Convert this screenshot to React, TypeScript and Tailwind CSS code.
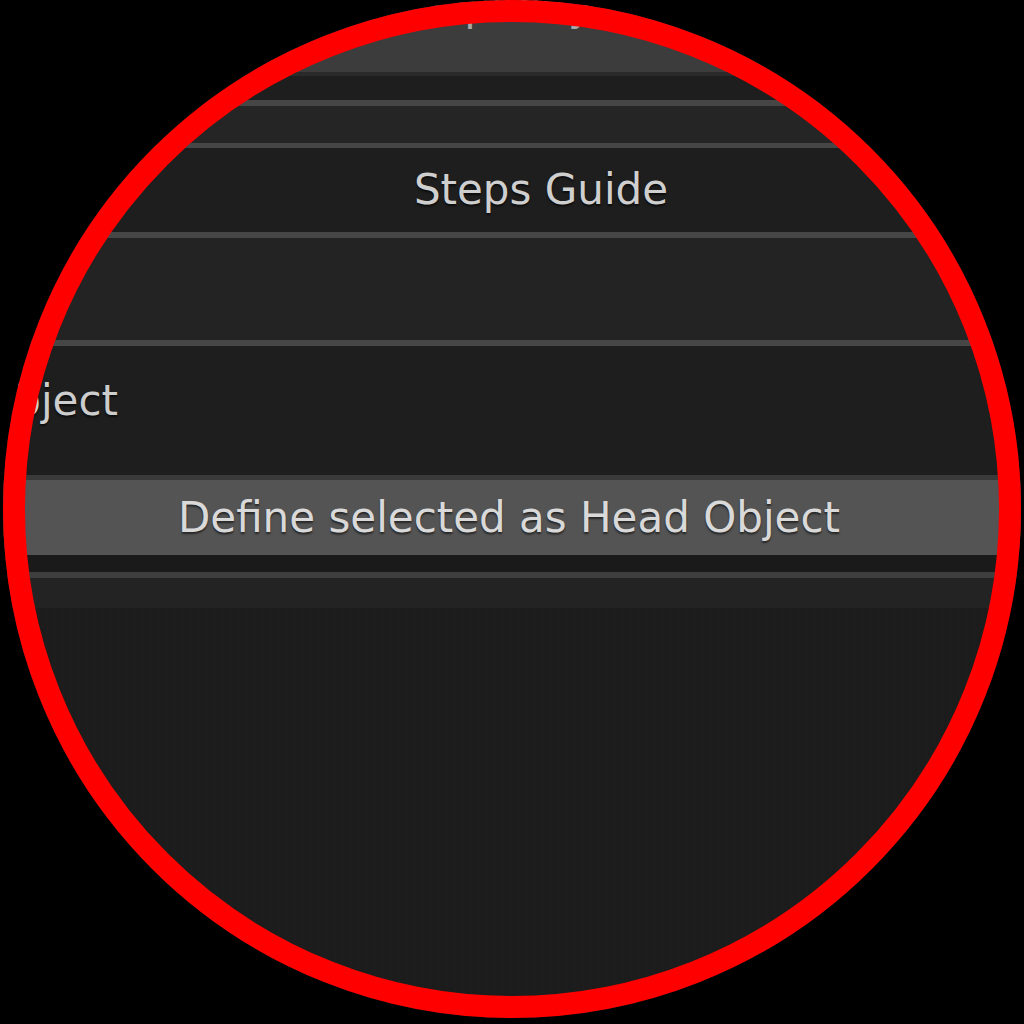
import React from 'react';

const font = { fontFamily: '"DejaVu Sans", "Liberation Sans", sans-serif' };

const Line = ({ c = 'bg-[#464646]', h = 'h-[6px]' }: { c?: string; h?: string }) => (
  <div className={`${h} ${c}`} />
);

export default function App() {
  return (
    <div className="relative w-[1024px] h-[1024px] overflow-hidden bg-[#1c1c1c] text-[42px] leading-none" style={font}>
      {/* zoomed panel */}
      <div className="flex flex-col">
        {/* header with slider label */}
        <div className="h-[72px] bg-[#3c3c3c] flex justify-center overflow-hidden">
          <span className="-mt-[15px] text-[#a8a8a8]">Opacity</span>
        </div>
        <div className="h-[4px] bg-[#2a2a2a]" />
        <div className="h-[24px] bg-[#1e1e1e]" />
        <Line />
        <div className="h-[37px] bg-[#252525]" />
        <Line h="h-[5px]" />
        <div className="h-[84px] bg-[#1e1e1e] flex items-center justify-center pl-[58px]">
          <span className="text-[#cfcfcf] [text-shadow:0_2px_2px_rgba(0,0,0,0.6)]">Steps Guide</span>
        </div>
        <Line />
        <div className="h-[102px] bg-[#232323]" />
        <Line />
        <div className="h-[129px] bg-[#1e1e1e] flex items-center pb-[20px]">
          <div className="w-[118px] flex justify-end whitespace-nowrap">
            <span className="text-[#cdcdcd] [text-shadow:0_2px_2px_rgba(0,0,0,0.6)]">Head Object</span>
          </div>
        </div>
        <div className="h-[5px] bg-[#3a3a3a]" />
        <div className="h-[75px] bg-[#545454] flex items-center justify-center pr-[6px]">
          <span className="text-[#d9d9d9] [text-shadow:0_2px_2px_rgba(0,0,0,0.55)]">Define selected as Head Object</span>
        </div>
        <div className="h-[17px] bg-[#1a1a1a]" />
        <Line c="bg-[#3e3e3e]" />
        <div className="h-[30px] bg-[#232323]" />
        <div className="h-[416px] bg-[#1c1c1c] bg-[repeating-linear-gradient(90deg,#1c1c1c_0px,#1c1c1c_6px,#1d1d1d_6px,#1d1d1d_8px)]" />
      </div>

      {/* magnifier ring + black outside */}
      <div className="absolute left-[3px] top-0 w-[1018px] h-[1018px] rounded-full border-[22px] border-[#ff0000] shadow-[0_0_0_700px_#000]" />
    </div>
  );
}
